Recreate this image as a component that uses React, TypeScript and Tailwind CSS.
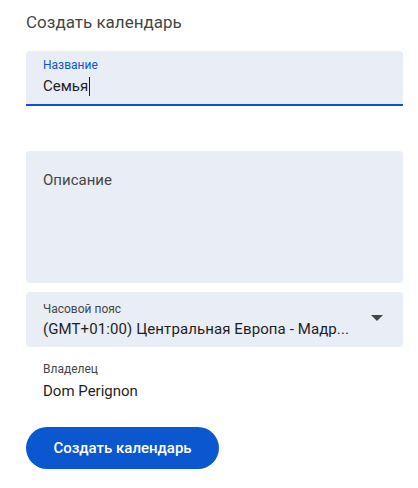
import { useState } from "react";

export default function App() {
  const [description, setDescription] = useState("");

  return (
    <div className="min-h-[488px] w-[418px] bg-white pl-[26px] pr-[15px] pt-[11px] font-['Roboto',sans-serif] text-[#1f1f1f]">
      <h1 className="text-[17px] leading-[22px] font-normal text-[#444746]">Создать календарь</h1>

      <div className="mt-[18px] h-[55px] rounded-t-[4px] border-b-[2px] border-[#0b57d0] bg-[#e9edf6] px-[17px] pt-[6px]">
        <span className="block text-[12px] leading-[16px] text-[#0b57d0]">Название</span>
        <div className="mt-[3px] flex items-center text-[15px] leading-[20px] text-[#1f1f1f]">
          <span>Семья</span>
          <span className="ml-px inline-block h-[19px] w-px bg-[#1f1f1f]" />
        </div>
      </div>

      <textarea
        value={description}
        onChange={(e) => setDescription(e.target.value)}
        placeholder="Описание"
        className="mt-[45px] block h-[132px] w-full resize-none rounded-[4px] bg-[#e9edf6] px-[17px] pt-[19px] text-[15px] leading-[20px] text-[#1f1f1f] outline-none placeholder:text-[#444746]"
      />

      <button
        type="button"
        className="mt-[9px] flex h-[55px] w-full items-center rounded-[4px] bg-[#e9edf6] pl-[17px] pr-[20px] text-left"
      >
        <span className="min-w-0 flex-1">
          <span className="block text-[12px] leading-[16px] text-[#444746]">Часовой пояс</span>
          <span className="mt-[2px] block truncate text-[15px] leading-[20px] tracking-[0.1px] text-[#1f1f1f]">
            (GMT+01:00) Центральная Европа - Мадр...
          </span>
        </span>
        <svg width="12" height="6" viewBox="0 0 12 6" className="ml-[16px] mb-[4px] shrink-0" aria-hidden="true">
          <path d="M0 0h12L6 6z" fill="#444746" />
        </svg>
      </button>

      <div className="mt-[14px] px-[17px]">
        <div className="text-[12px] leading-[16px] text-[#444746]">Владелец</div>
        <div className="mt-[4px] text-[15px] leading-[20px] text-[#1f1f1f]">Dom Perignon</div>
      </div>

      <button
        type="button"
        className="mt-[26px] flex h-[42px] w-[193px] items-center justify-center rounded-full bg-[#0b57d0] text-[15px] font-medium text-white"
      >
        Создать календарь
      </button>
    </div>
  );
}
